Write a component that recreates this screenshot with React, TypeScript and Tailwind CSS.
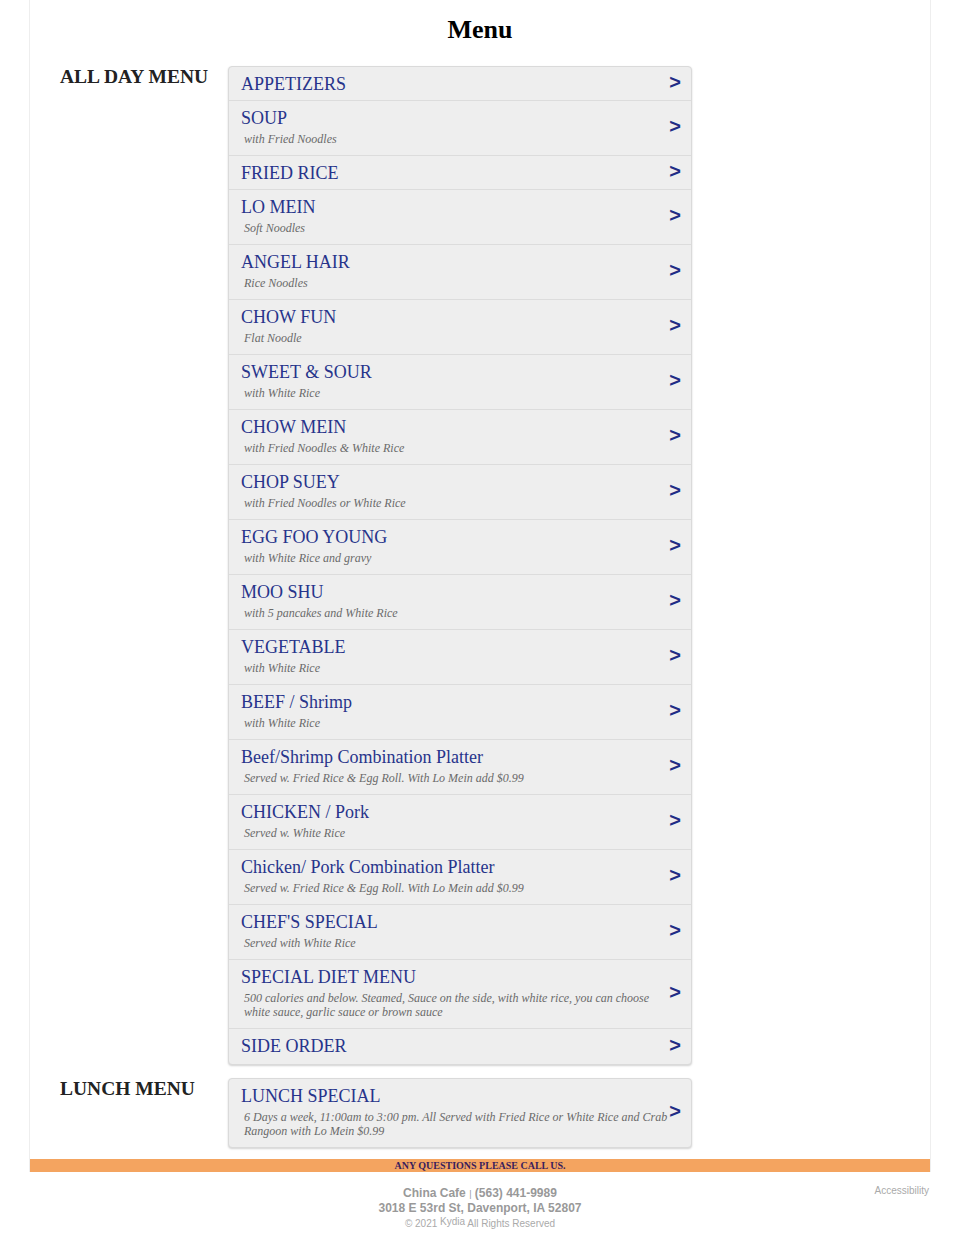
import React from "react";

type Item = { title: string; sub?: string };

const allDay: Item[] = [
  { title: "APPETIZERS" },
  { title: "SOUP", sub: "with Fried Noodles" },
  { title: "FRIED RICE" },
  { title: "LO MEIN", sub: "Soft Noodles" },
  { title: "ANGEL HAIR", sub: "Rice Noodles" },
  { title: "CHOW FUN", sub: "Flat Noodle" },
  { title: "SWEET & SOUR", sub: "with White Rice" },
  { title: "CHOW MEIN", sub: "with Fried Noodles & White Rice" },
  { title: "CHOP SUEY", sub: "with Fried Noodles or White Rice" },
  { title: "EGG FOO YOUNG", sub: "with White Rice and gravy" },
  { title: "MOO SHU", sub: "with 5 pancakes and White Rice" },
  { title: "VEGETABLE", sub: "with White Rice" },
  { title: "BEEF / Shrimp", sub: "with White Rice" },
  { title: "Beef/Shrimp Combination Platter", sub: "Served w. Fried Rice & Egg Roll. With Lo Mein add $0.99" },
  { title: "CHICKEN / Pork", sub: "Served w. White Rice" },
  { title: "Chicken/ Pork Combination Platter", sub: "Served w. Fried Rice & Egg Roll. With Lo Mein add $0.99" },
  { title: "CHEF'S SPECIAL", sub: "Served with White Rice" },
  {
    title: "SPECIAL DIET MENU",
    sub: "500 calories and below. Steamed, Sauce on the side, with white rice, you can choose white sauce, garlic sauce or brown sauce",
  },
  { title: "SIDE ORDER" },
];

const lunch: Item[] = [
  {
    title: "LUNCH SPECIAL",
    sub: "6 Days a week, 11:00am to 3:00 pm. All Served with Fried Rice or White Rice and Crab Rangoon with Lo Mein $0.99",
  },
];

function MenuRow({ item, last }: { item: Item; last: boolean }) {
  const pad = item.sub ? "pb-[9px]" : last ? "pb-[7px]" : "pb-[5px]";
  return (
    <div
      className={`relative cursor-pointer pl-3 pr-[18px] pt-[6px] ${pad} ${last ? "" : "border-b border-[#dcdcdc]"}`}
    >
      <div className="text-[18px] leading-[22px] text-[#27348b]">{item.title}</div>
      {item.sub && (
        <div className="ml-[3px] mt-[3px] text-[12px] italic leading-[14px] text-[#6a6a6a]">{item.sub}</div>
      )}
      <span className="absolute right-[10px] top-1/2 -translate-y-[62%] font-['Liberation_Sans',Arial,sans-serif] text-[20px] font-bold leading-none text-[#1f2c85]">
        &gt;
      </span>
    </div>
  );
}

function Section({ label, items }: { label: string; items: Item[] }) {
  return (
    <div className="flex">
      <div className="w-[198px] shrink-0 pl-[30px] pt-[1px] text-[19.5px] font-bold leading-[20px] text-[#222]">{label}</div>
      <div className="w-[464px] overflow-hidden rounded-[4px] border border-[#dadada] bg-[#eeeeee] shadow-[0_1px_2px_rgba(0,0,0,0.18)]">
        {items.map((item, i) => (
          <MenuRow key={item.title} item={item} last={i === items.length - 1} />
        ))}
      </div>
    </div>
  );
}

export default function App() {
  return (
    <div className="min-h-[1250px] bg-white font-['Liberation_Serif','Times_New_Roman',serif]">
      <div className="mx-[29px] border-x border-[#eeeeee]">
        <h1 className="pt-[15px] text-center text-[26px] font-bold leading-[30px] text-black">Menu</h1>
        <div className="mt-[21px] flex flex-col gap-[13px]">
          <Section label="ALL DAY MENU" items={allDay} />
          <Section label="LUNCH MENU" items={lunch} />
        </div>
        <div className="mt-[11px] bg-[#f4a460] text-center text-[10px] font-bold leading-[13px] text-[#3a1d5c]">
          ANY QUESTIONS PLEASE CALL US.
        </div>
      </div>
      <div className="relative mx-[29px] pt-[14px] text-center font-['Liberation_Sans',Arial,sans-serif] text-[#999]">
        <div className="text-[12px] font-bold leading-[14px]">
          China Cafe <span className="text-[9px] font-normal">|</span> (563) 441-9989
        </div>
        <div className="text-[12px] font-bold leading-[14px]">3018 E 53rd St, Davenport, IA 52807</div>
        <div className="mt-[2px] text-[10px] leading-[14px] text-[#aaa]">
          © 2021 <span className="relative -top-[2px]">Kydia</span> All Rights Reserved
        </div>
        <div className="absolute right-[2px] top-[12px] text-[10px] leading-[14px] text-[#aaa]">Accessibility</div>
      </div>
    </div>
  );
}
